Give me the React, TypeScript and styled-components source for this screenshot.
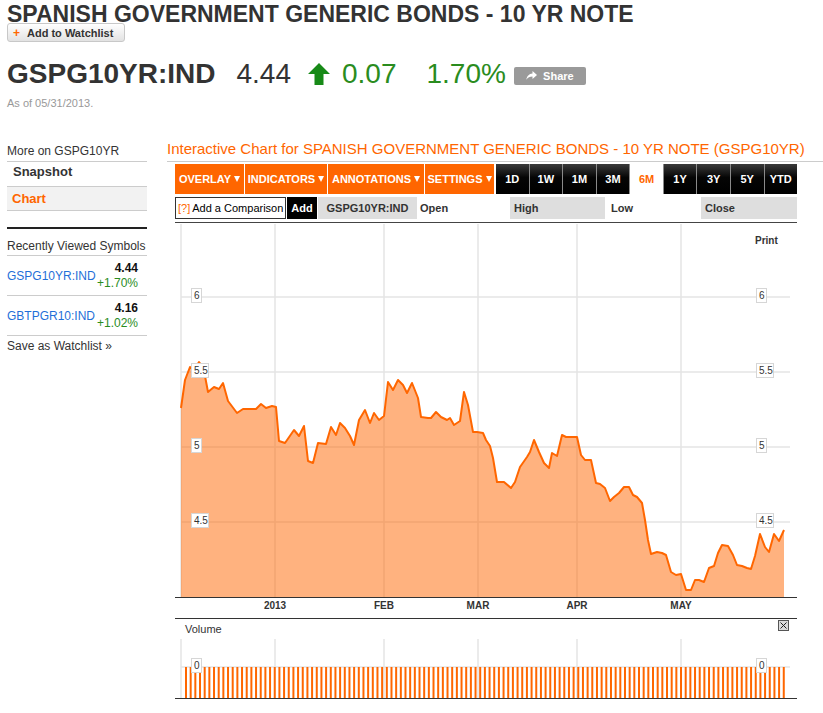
import React from 'react';
import styled, { createGlobalStyle } from 'styled-components';

const ORANGE = '#ff6600';
const GREEN = '#2a8c1e';
const BLUE = '#1f6fd8';

const GlobalStyle = createGlobalStyle`
  html, body {
    margin: 0;
    padding: 0;
    background: #fff;
  }
  body {
    font-family: "Liberation Sans", Arial, sans-serif;
    color: #333;
  }
  button {
    font-family: "Liberation Sans", Arial, sans-serif;
  }
`;

const Page = styled.div`
  width: 823px;
  padding-left: 7px;
  box-sizing: border-box;
`;

const Title = styled.h1`
  margin: 0;
  padding-top: 6px;
  font-size: 23px;
  line-height: 17px;
  font-weight: bold;
  color: #333;
  white-space: nowrap;
`;

const WatchButton = styled.button`
  display: flex;
  align-items: center;
  gap: 7px;
  width: 118px;
  height: 19px;
  padding: 0 0 0 5px;
  border: 1px solid #c8c8c8;
  border-radius: 3px;
  background: linear-gradient(#ffffff, #e2e2e2);
  font-size: 11px;
  font-weight: bold;
  color: #333;
  cursor: pointer;
`;

const Plus = styled.span`
  color: ${ORANGE};
  font-size: 12px;
  font-weight: bold;
`;

const QuoteRow = styled.div`
  display: flex;
  align-items: center;
  margin-top: 18px;
  height: 28px;
  font-size: 28px;
  line-height: 28px;
  white-space: nowrap;
`;

const Ticker = styled.span`
  font-weight: bold;
  color: #333;
`;

const Last = styled.span`
  margin-left: 21px;
  color: #333;
`;

const ArrowIcon = styled.svg`
  margin-left: 17px;
  flex: none;
`;

const Change = styled.span<{ $gap: number }>`
  margin-left: ${(p) => p.$gap}px;
  color: ${GREEN};
`;

const ShareButton = styled.button`
  display: flex;
  align-items: center;
  justify-content: center;
  gap: 6px;
  margin: 3px 0 0 8px;
  width: 72px;
  height: 18px;
  padding: 0;
  border: none;
  border-radius: 2px;
  background: #9a9a9a;
  color: #fff;
  font-size: 11px;
  font-weight: bold;
`;

const AsOf = styled.div`
  margin-top: 9px;
  font-size: 11px;
  line-height: 13px;
  color: #999;
`;

const Body = styled.div`
  display: flex;
  margin-top: 30px;
`;

const Sidebar = styled.aside`
  width: 140px;
  flex: none;
  font-size: 12px;
  color: #333;
`;

const SideHeading = styled.div`
  height: 21px;
  line-height: 22px;
  border-bottom: 1px solid #ccc;
`;

const NavItem = styled.div<{ $active?: boolean }>`
  height: ${(p) => (p.$active ? 23 : 24)}px;
  line-height: ${(p) => (p.$active ? 23 : 20)}px;
  padding-left: ${(p) => (p.$active ? 5 : 6)}px;
  border-bottom: 1px solid #ccc;
  background: ${(p) => (p.$active ? '#f2f2f2' : 'transparent')};
  color: ${(p) => (p.$active ? ORANGE : '#333')};
  font-size: 13px;
  font-weight: bold;
`;

const ThickRule = styled.div`
  margin-top: 16px;
  height: 2px;
  background: #222;
`;

const RecentHeading = styled.div`
  padding-top: 8px;
  line-height: 18px;
  border-bottom: 1px solid #ccc;
`;

const RecentRow = styled.div`
  display: flex;
  align-items: center;
  justify-content: space-between;
  height: 39px;
  padding-right: 9px;
  border-bottom: 1px solid #ccc;
`;

const SymbolLink = styled.a`
  color: ${BLUE};
  line-height: 14px;
  text-decoration: none;
`;

const RecentQuote = styled.div`
  text-align: right;
  line-height: 15px;
`;

const RecentLast = styled.div`
  font-weight: bold;
  color: #111;
`;

const RecentPct = styled.div`
  color: ${GREEN};
`;

const SaveLink = styled.div`
  padding-top: 3px;
  line-height: 15px;
  color: #333;
`;

const Main = styled.main`
  flex: 1;
  min-width: 0;
  margin-left: 20px;
`;

const ChartTitle = styled.h2`
  margin: 0;
  padding-bottom: 3px;
  border-bottom: 1px solid #ccc;
  font-size: 15px;
  line-height: 18px;
  font-weight: normal;
  color: ${ORANGE};
  white-space: nowrap;
`;

const ChartBox = styled.div`
  width: 622px;
  margin-left: 8px;
`;

const Toolbar = styled.div`
  display: flex;
  margin-top: 2px;
  height: 30px;
`;

const MenuGroup = styled.div`
  display: flex;
  gap: 1px;
`;

const MenuButton = styled.button<{ $w: number }>`
  display: flex;
  align-items: center;
  justify-content: center;
  gap: 3px;
  width: ${(p) => p.$w}px;
  height: 30px;
  padding: 0;
  border: none;
  background: ${ORANGE};
  color: #fff;
  font-size: 11px;
  font-weight: bold;
  &::after {
    content: '';
    border-left: 3.5px solid transparent;
    border-right: 3.5px solid transparent;
    border-top: 6px solid #fff;
  }
`;

const RangeGroup = styled.div`
  display: flex;
  flex: 1;
  gap: 1px;
  margin-left: 2px;
  background: #8a8a8a;
`;

const RangeButton = styled.button<{ $active?: boolean }>`
  flex: 1;
  height: 30px;
  padding: 0;
  border: none;
  background: ${(p) => (p.$active ? '#fff' : 'linear-gradient(#3a3a3a, #050505 45%, #000)')};
  color: ${(p) => (p.$active ? ORANGE : '#fff')};
  font-size: 11px;
  font-weight: bold;
`;

const CompareRow = styled.div`
  display: flex;
  gap: 1px;
  margin-top: 3px;
  height: 22px;
  font-size: 11px;
  line-height: 20px;
`;

const CompareBox = styled.div`
  width: 111px;
  box-sizing: border-box;
  padding-left: 2px;
  border: 1px solid #333;
  color: #000;
  white-space: nowrap;
`;

const Help = styled.span`
  color: ${ORANGE};
  margin-right: 2px;
`;

const AddButton = styled.button`
  width: 30px;
  height: 22px;
  padding: 0;
  border: none;
  background: #000;
  color: #fff;
  font-size: 11px;
  font-weight: bold;
`;

const Cell = styled.div<{ $w: number; $shaded?: boolean; $indent?: number; $center?: boolean }>`
  width: ${(p) => p.$w}px;
  padding-left: ${(p) => p.$indent ?? 4}px;
  box-sizing: border-box;
  line-height: 22px;
  background: ${(p) => (p.$shaded ? '#dedede' : 'transparent')};
  text-align: ${(p) => (p.$center ? 'center' : 'left')};
  font-weight: bold;
  color: #333;
`;

const ChartSvg = styled.svg`
  display: block;
  margin-top: 3px;
  font-family: "Liberation Sans", Arial, sans-serif;
`;

const VolumeHeader = styled.div`
  display: flex;
  justify-content: space-between;
  align-items: flex-start;
  height: 20px;
  padding: 0 8px 0 10px;
  font-size: 11px;
  line-height: 20px;
  color: #333;
`;

const CloseButton = styled.button`
  display: flex;
  align-items: center;
  justify-content: center;
  margin-top: 1px;
  width: 11px;
  height: 11px;
  padding: 0;
  border: 1px solid #555;
  background: #dcdcdc;
`;

const VolumeSvg = styled.svg`
  display: block;
  font-family: "Liberation Sans", Arial, sans-serif;
`;

// page coordinates traced from the chart, shifted into the svg box below
const X0 = 175;
const Y0 = 222;
const PRICE: [number, number][] = [
  [181, 408], [185, 380], [190, 367], [194, 370], [199, 362], [202, 366], [205, 376], [208, 392],
  [214, 387], [219, 389], [223, 383], [228, 401], [237, 413], [243, 409], [256, 409], [261, 404],
  [266, 408], [272, 406], [276, 407], [279, 441], [285, 443], [294, 430], [299, 436], [304, 426],
  [308, 461], [313, 463], [318, 443], [326, 444], [331, 427], [336, 435], [340, 423], [345, 428],
  [350, 436], [354, 445], [359, 420], [365, 410], [370, 423], [374, 413], [379, 420], [384, 416],
  [388, 382], [393, 390], [398, 380], [403, 385], [407, 393], [412, 383], [418, 398], [421, 417],
  [428, 418], [431, 418], [436, 412], [441, 417], [447, 420], [450, 418], [454, 425], [460, 421],
  [464, 392], [468, 405], [473, 432], [477, 432], [483, 433], [486, 440], [490, 446], [493, 458],
  [497, 482], [504, 482], [511, 488], [515, 482], [520, 467], [527, 457], [530, 452], [534, 440],
  [539, 452], [544, 463], [549, 468], [552, 453], [557, 456], [562, 435], [566, 437], [577, 437],
  [581, 455], [585, 460], [591, 460], [596, 483], [600, 484], [605, 488], [610, 501], [614, 497],
  [619, 493], [624, 487], [629, 487], [633, 495], [637, 497], [642, 503], [645, 520], [648, 540],
  [651, 554], [657, 552], [662, 553], [666, 555], [671, 572], [676, 575], [681, 574], [686, 590],
  [691, 590], [695, 580], [699, 580], [704, 582], [709, 568], [714, 566], [718, 553], [722, 545],
  [728, 546], [733, 555], [737, 565], [742, 566], [747, 568], [751, 569], [755, 556], [760, 534],
  [765, 547], [769, 552], [774, 534], [779, 541], [784, 530],
];

const GRID_X = [6, 100, 209, 303, 402, 506];
const MONTHS: [string, number][] = [['2013', 100], ['FEB', 209], ['MAR', 303], ['APR', 402], ['MAY', 506]];
const LEVELS: [number, string][] = [[75, '6'], [150, '5.5'], [225, '5'], [300, '4.5']];
const BASE = 375;
const GRID = '#e4e4e4';

const line = PRICE.map(([x, y]) => `${x - X0},${y - Y0}`).join(' ');
const area = `${PRICE[0][0] - X0},${BASE} ${line} ${PRICE[PRICE.length - 1][0] - X0},${BASE}`;

function AxisLabel({ x, y, text }: { x: number; y: number; text: string }) {
  const w = text.length > 1 ? 17 : 10;
  return (
    <g>
      <rect x={x + 0.5} y={y - 8.5} width={w} height={14} fill="#fff" stroke="#d6d6d6" />
      <text x={x + 3} y={y + 2} fontSize="10" fill="#333">
        {text}
      </text>
    </g>
  );
}

function PriceChart() {
  return (
    <ChartSvg width={622} height={397} viewBox="0 0 622 397">
      <line x1={0} y1={0.5} x2={622} y2={0.5} stroke="#444" />
      {GRID_X.map((x) => (
        <line key={x} x1={x} y1={2} x2={x} y2={BASE} stroke={GRID} strokeWidth={1.5} />
      ))}
      {LEVELS.map(([y]) => (
        <line key={y} x1={6} y1={y} x2={615} y2={y} stroke={GRID} strokeWidth={1.5} />
      ))}
      <polygon points={area} fill={ORANGE} fillOpacity={0.5} />
      <polyline points={line} fill="none" stroke={ORANGE} strokeWidth={2} strokeLinejoin="round" />
      {LEVELS.map(([y, t]) => (
        <g key={t}>
          <AxisLabel x={16} y={y} text={t} />
          <AxisLabel x={581} y={y} text={t} />
        </g>
      ))}
      <text x={580} y={22} fontSize="10" fontWeight="bold" fill="#333">
        Print
      </text>
      <line x1={0} y1={BASE + 0.5} x2={622} y2={BASE + 0.5} stroke="#333" />
      {MONTHS.map(([m, x]) => (
        <text key={m} x={x} y={387} fontSize="10" fontWeight="bold" fill="#333" textAnchor="middle">
          {m}
        </text>
      ))}
      <line x1={0} y1={396.5} x2={622} y2={396.5} stroke="#333" />
    </ChartSvg>
  );
}

const BARS = Array.from({ length: 129 }, (_, i) => 10 + i * 4.67);

function VolumeChart() {
  return (
    <VolumeSvg width={622} height={61} viewBox="0 0 622 61">
      {GRID_X.map((x) => (
        <line key={x} x1={x} y1={0} x2={x} y2={59} stroke={GRID} strokeWidth={1.5} />
      ))}
      <line x1={6} y1={28} x2={615} y2={28} stroke={GRID} strokeWidth={1.5} />
      {BARS.map((x) => (
        <rect key={x} x={x} y={28} width={2} height={31} fill={ORANGE} />
      ))}
      <AxisLabel x={16} y={28} text="0" />
      <AxisLabel x={581} y={28} text="0" />
      <line x1={0} y1={59.5} x2={622} y2={59.5} stroke="#333" />
    </VolumeSvg>
  );
}

const RECENT = [
  { symbol: 'GSPG10YR:IND', last: '4.44', pct: '+1.70%' },
  { symbol: 'GBTPGR10:IND', last: '4.16', pct: '+1.02%' },
];

const RANGES = ['1D', '1W', '1M', '3M', '6M', '1Y', '3Y', '5Y', 'YTD'];

export default function App() {
  return (
    <Page>
      <GlobalStyle />
      <Title>SPANISH GOVERNMENT GENERIC BONDS - 10 YR NOTE</Title>
      <WatchButton>
        <Plus>+</Plus>
        Add to Watchlist
      </WatchButton>

      <QuoteRow>
        <Ticker>GSPG10YR:IND</Ticker>
        <Last>4.44</Last>
        <ArrowIcon width={22} height={22} viewBox="0 0 22 22">
          <polygon points="11,0 22,11 15.5,11 15.5,22 6.5,22 6.5,11 0,11" fill="#178a17" />
        </ArrowIcon>
        <Change $gap={12}>0.07</Change>
        <Change $gap={30}>1.70%</Change>
        <ShareButton>
          <svg width={11} height={9} viewBox="0 0 11 9">
            <path d="M6.5 0 L11 4 L6.5 8 V5.6 C3.8 5.6 1.8 6.6 0.3 8.8 C0.8 5.2 3 2.7 6.5 2.4 Z" fill="#fff" />
          </svg>
          Share
        </ShareButton>
      </QuoteRow>
      <AsOf>As of 05/31/2013.</AsOf>

      <Body>
        <Sidebar>
          <SideHeading>More on GSPG10YR</SideHeading>
          <NavItem>Snapshot</NavItem>
          <NavItem $active>Chart</NavItem>
          <ThickRule />
          <RecentHeading>Recently Viewed Symbols</RecentHeading>
          {RECENT.map((r) => (
            <RecentRow key={r.symbol}>
              <SymbolLink href="#">{r.symbol}</SymbolLink>
              <RecentQuote>
                <RecentLast>{r.last}</RecentLast>
                <RecentPct>{r.pct}</RecentPct>
              </RecentQuote>
            </RecentRow>
          ))}
          <SaveLink>Save as Watchlist »</SaveLink>
        </Sidebar>

        <Main>
          <ChartTitle>
            Interactive Chart for SPANISH GOVERNMENT GENERIC BONDS - 10 YR NOTE (GSPG10YR)
          </ChartTitle>
          <ChartBox>
            <Toolbar>
              <MenuGroup>
                <MenuButton $w={69}>OVERLAY</MenuButton>
                <MenuButton $w={82}>INDICATORS</MenuButton>
                <MenuButton $w={96}>ANNOTATIONS</MenuButton>
                <MenuButton $w={69}>SETTINGS</MenuButton>
              </MenuGroup>
              <RangeGroup>
                {RANGES.map((r) => (
                  <RangeButton key={r} $active={r === '6M'}>
                    {r}
                  </RangeButton>
                ))}
              </RangeGroup>
            </Toolbar>

            <CompareRow>
              <CompareBox>
                <Help>[?]</Help>Add a Comparison
              </CompareBox>
              <AddButton>Add</AddButton>
              <Cell $w={99} $shaded $center $indent={0}>
                GSPG10YR:IND
              </Cell>
              <Cell $w={91} $indent={2}>Open</Cell>
              <Cell $w={95} $shaded>High</Cell>
              <Cell $w={94} $indent={5}>Low</Cell>
              <Cell $w={96} $shaded>Close</Cell>
            </CompareRow>

            <PriceChart />

            <VolumeHeader>
              <span>Volume</span>
              <CloseButton aria-label="close">
                <svg width={7} height={7} viewBox="0 0 7 7">
                  <path d="M0.5 0.5 L6.5 6.5 M6.5 0.5 L0.5 6.5" stroke="#222" strokeWidth={1} />
                </svg>
              </CloseButton>
            </VolumeHeader>
            <VolumeChart />
          </ChartBox>
        </Main>
      </Body>
    </Page>
  );
}
